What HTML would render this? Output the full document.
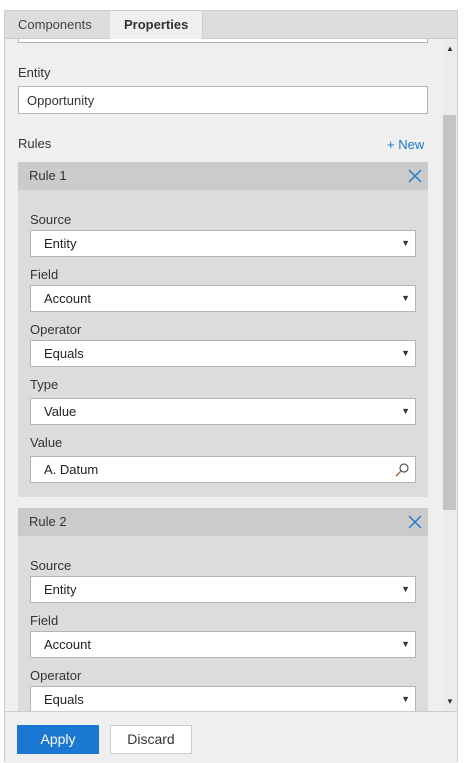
<!DOCTYPE html>
<html><head><style>
body{margin:0;width:468px;height:762px;background:#fff;font-family:"Liberation Sans",sans-serif;font-size:13px;color:#333;position:relative;overflow:hidden}
.abs{position:absolute}
.panel{left:4px;top:10px;width:454px;height:752px;background:#efefef;border:1px solid #ccc;border-bottom:none;box-sizing:border-box}
.lbl{position:absolute;font-size:13px;color:#333}
.sel{position:absolute;left:30px;width:386px;height:27px;background:#fff;border:1px solid #b5b5b5;box-sizing:border-box;font-size:13px;line-height:25px;padding-left:13px;color:#222}
.sel .ar{position:absolute;right:5px;top:0;font-size:9px;color:#333}
.hdr{position:absolute;left:18px;width:410px;height:28px;background:#cbcbcb;line-height:28px;padding-left:11px;box-sizing:border-box;color:#333}
.body{position:absolute;left:18px;width:410px;background:#dcdcdc}
</style></head><body>
<div class="abs panel"></div>
<div class="abs" style="left:5px;top:11px;width:452px;height:27px;background:#ddd;border-bottom:1px solid #ccc"></div>
<div class="abs" style="left:18px;top:17px;font-size:13px;color:#444">Components</div>
<div class="abs" style="left:110px;top:11px;width:92px;height:28px;background:#efefef;border-right:1px solid #ccc"></div>
<div class="abs" style="left:124px;top:17px;font-size:13px;color:#333;font-weight:bold">Properties</div>
<div class="abs" style="left:18px;top:39px;width:410px;height:4px;background:#fff;border:1px solid #b5b5b5;border-top:none;box-sizing:border-box"></div>
<div class="abs" style="left:443px;top:40px;width:14px;height:672px;background:#ececec"></div>
<div class="abs" style="left:446px;top:44px;font-size:8px">▲</div>
<div class="abs" style="left:443px;top:115px;width:13px;height:395px;background:#c4c4c4"></div>
<div class="abs" style="left:446px;top:697px;font-size:8px">▼</div>
<div class="lbl" style="left:18px;top:65px">Entity</div>
<div class="abs" style="left:18px;top:86px;width:410px;height:28px;background:#fff;border:1px solid #b5b5b5;box-sizing:border-box;line-height:27px;padding-left:8px">Opportunity</div>
<div class="lbl" style="left:18px;top:136px">Rules</div>
<div class="lbl" style="left:387px;top:137px;color:#1a77d2">+ New</div>

<div class="hdr" style="top:162px">Rule 1</div>
<svg class="abs" style="left:408px;top:169px" width="14" height="14"><path d="M1 1L13 13M13 1L1 13" stroke="#1a77d2" stroke-width="1.3"/></svg>
<div class="body" style="top:190px;height:307px"></div>
<div class="lbl" style="left:30px;top:212px">Source</div>
<div class="sel" style="top:230px">Entity<span class="ar">▼</span></div>
<div class="lbl" style="left:30px;top:267px">Field</div>
<div class="sel" style="top:285px">Account<span class="ar">▼</span></div>
<div class="lbl" style="left:30px;top:322px">Operator</div>
<div class="sel" style="top:340px">Equals<span class="ar">▼</span></div>
<div class="lbl" style="left:30px;top:377px">Type</div>
<div class="sel" style="top:398px">Value<span class="ar">▼</span></div>
<div class="lbl" style="left:30px;top:435px">Value</div>
<div class="sel" style="top:456px">A. Datum<svg style="position:absolute;right:6px;top:6px" width="14" height="14"><circle cx="9" cy="5" r="4" fill="none" stroke="#555" stroke-width="1.2"/><path d="M6 8L1 13" stroke="#a06040" stroke-width="1.3"/></svg></div>

<div class="hdr" style="top:508px">Rule 2</div>
<svg class="abs" style="left:408px;top:515px" width="14" height="14"><path d="M1 1L13 13M13 1L1 13" stroke="#1a77d2" stroke-width="1.3"/></svg>
<div class="body" style="top:536px;height:176px"></div>
<div class="lbl" style="left:30px;top:558px">Source</div>
<div class="sel" style="top:576px">Entity<span class="ar">▼</span></div>
<div class="lbl" style="left:30px;top:613px">Field</div>
<div class="sel" style="top:631px">Account<span class="ar">▼</span></div>
<div class="lbl" style="left:30px;top:668px">Operator</div>
<div class="sel" style="top:686px">Equals<span class="ar">▼</span></div>

<div class="abs" style="left:5px;top:711px;width:452px;height:51px;background:#efefef;border-top:1px solid #ccc"></div>
<div class="abs" style="left:17px;top:725px;width:82px;height:29px;background:#1a77d2;color:#fff;text-align:center;line-height:29px;font-size:14px">Apply</div>
<div class="abs" style="left:110px;top:725px;width:82px;height:29px;background:#fff;border:1px solid #ccc;box-sizing:border-box;color:#333;text-align:center;line-height:27px;font-size:14px">Discard</div>
</body></html>
